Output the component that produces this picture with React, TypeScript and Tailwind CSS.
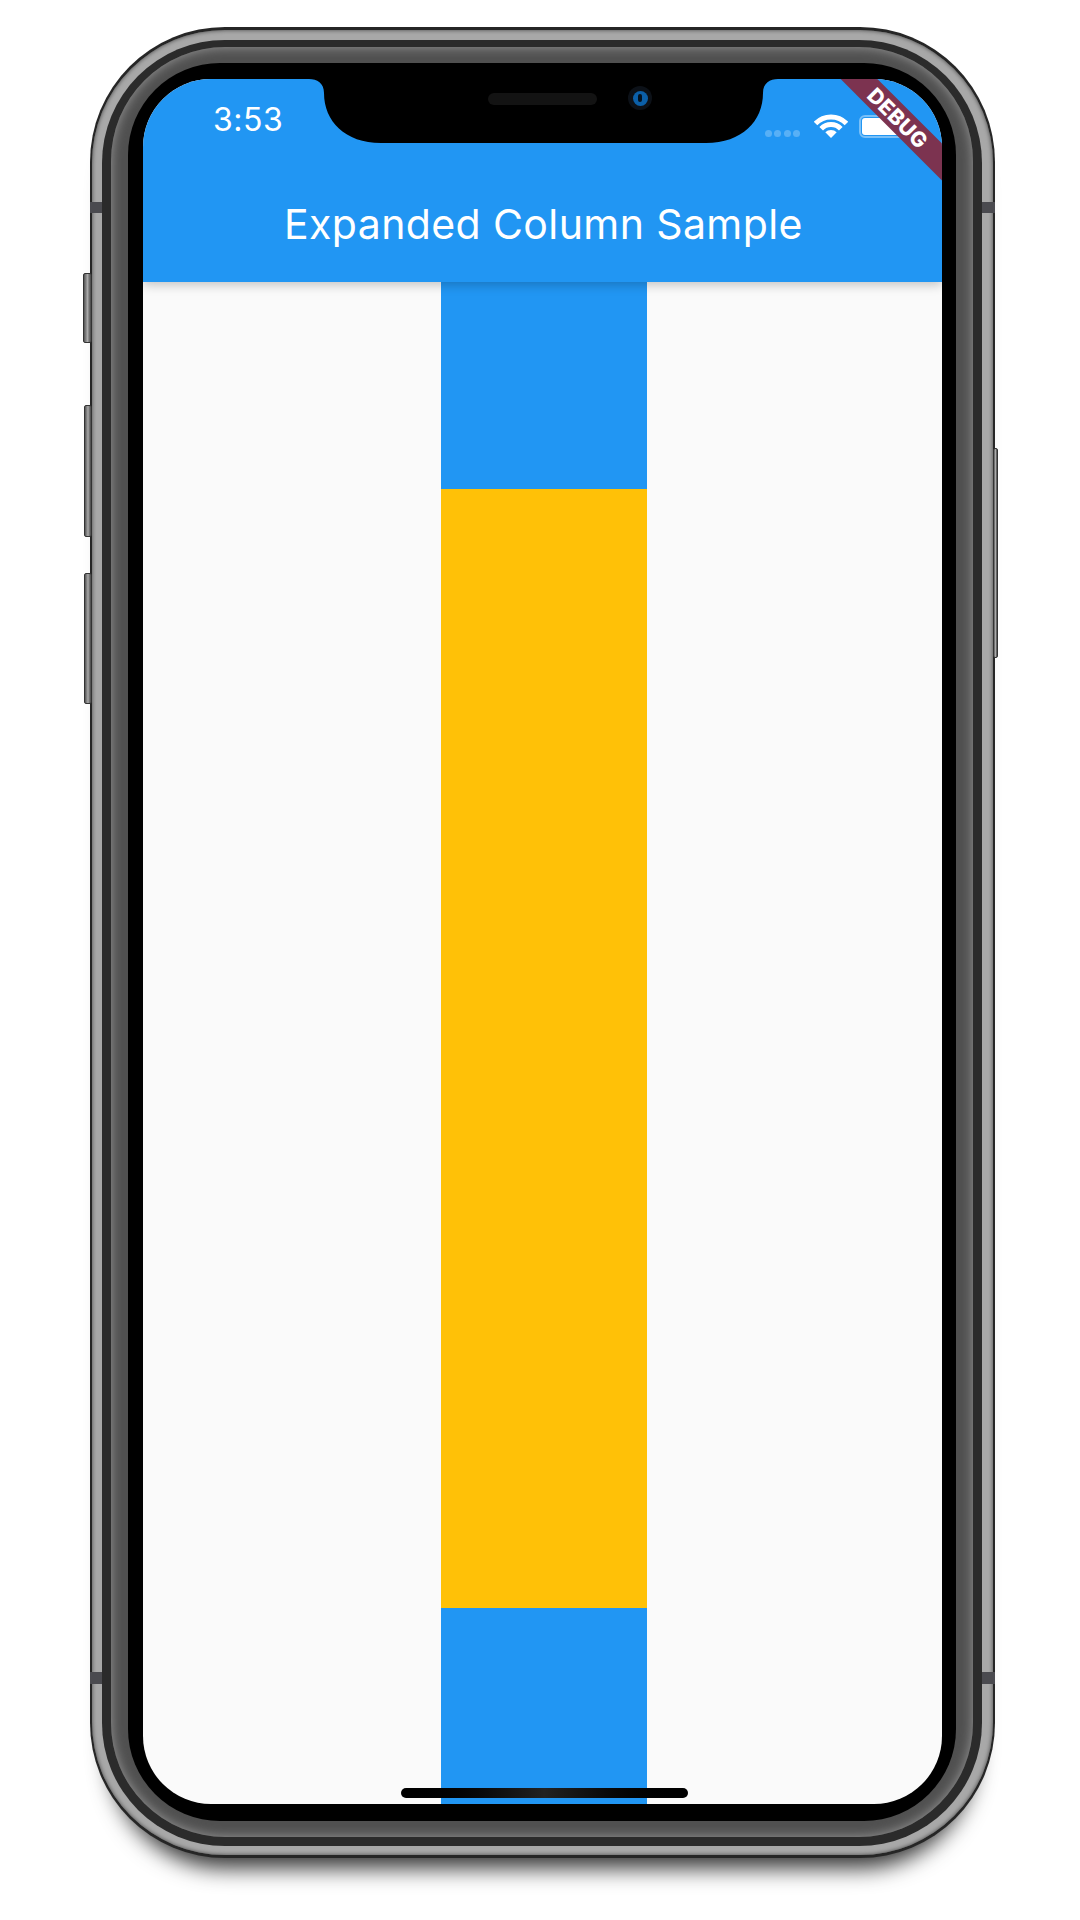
import * as React from 'react';

const SideButton = ({ className }: { className: string }) => (
	<div
		className={`absolute rounded-[2px] border border-[#333] bg-gradient-to-r from-[#555] via-[#aaa] to-[#444] ${className}`}
	/>
);

const Wifi = () => (
	<svg width="34" height="24" viewBox="0 0 34 24" fill="none">
		<path d="M1.5 9.5A21.5 21.5 0 0 1 32.5 9.5" stroke="white" strokeWidth="5" />
		<path d="M7.2 14.8A13.5 13.5 0 0 1 26.8 14.8" stroke="white" strokeWidth="5" />
		<path d="M17 24L11.3 18.3A8 8 0 0 1 22.7 18.3Z" fill="white" />
	</svg>
);

const StatusBar = () => (
	<div className="flex h-[94px] items-end justify-between pb-[35px] pl-[70px] pr-[36px]">
		<span className="text-[32px] leading-[36px] tracking-[0.5px] text-white">3:53</span>
		<div className="flex items-center">
			<div className="mt-[14px] flex gap-[2.5px]">
				<div className="size-[7px] rounded-full bg-white/25" />
				<div className="size-[7px] rounded-full bg-white/25" />
				<div className="size-[7px] rounded-full bg-white/25" />
				<div className="size-[7px] rounded-full bg-white/25" />
			</div>
			<div className="ml-[14px] mr-[11px]">
				<Wifi />
			</div>
			<div className="h-[23px] w-[47px] rounded-[6px] border-2 border-white/40 p-[1px]">
				<div className="h-full w-[38px] rounded-[3px] bg-white" />
			</div>
		</div>
	</div>
);

const AppBar = () => (
	<div className="z-10 h-[203px] shrink-0 bg-[#2196f3] shadow-[0_3px_10px_rgba(0,0,0,0.22)]">
		<StatusBar />
		<div className="mt-[27px] pl-[141px] text-[41px] leading-[48px] tracking-[0.4px] text-white">
			Expanded Column Sample
		</div>
	</div>
);

const Notch = () => (
	<div className="absolute left-[166px] top-0 z-20">
		<div className="relative h-[65px] w-[469px]">
			<svg width="469" height="65" viewBox="0 0 469 65" className="block">
				<path
					d="M0 0C8 0 15 4 15 14C15 42 36 64 72 64H397C433 64 454 42 454 14C454 4 461 0 469 0Z"
					fill="black"
				/>
			</svg>
			<div className="absolute left-[179px] top-[14px] h-[12px] w-[109px] rounded-full bg-[#131313]" />
			<div className="absolute left-[319px] top-[7px] flex size-[24px] items-center justify-center rounded-full bg-[#0c1118]">
				<div className="flex size-[15px] items-center justify-center rounded-full bg-[#0b5fa8]">
					<div className="h-[8px] w-[4px] rounded-full bg-[#04121f]" />
				</div>
			</div>
		</div>
	</div>
);

const DebugBanner = () => (
	<div className="absolute left-[655px] top-[26px] z-30 flex h-[26px] w-[200px] rotate-45 items-center justify-center bg-[#7c3350] text-[21px] font-extrabold leading-none tracking-[0.5px] text-white">
		DEBUG
	</div>
);

const App = () => {
	return (
		<div className="h-[1920px] w-[1080px] overflow-hidden bg-white pl-[90px] pt-[27px] font-['Inter',sans-serif]">
			<div className="relative h-[1831px] w-[905px]">
				<SideButton className="left-[-7px] top-[246px] h-[70px] w-[9px]" />
				<SideButton className="left-[-6px] top-[378px] h-[132px] w-[8px]" />
				<SideButton className="left-[-6px] top-[546px] h-[131px] w-[8px]" />
				<SideButton className="right-[-3px] top-[421px] h-[210px] w-[5px]" />

				<div className="h-full w-full rounded-[135px] bg-[#262626] pb-[3px] pl-[2px] pr-[2px] pt-[3px] shadow-[0_30px_22px_-20px_rgba(0,0,0,0.8)]">
					<div className="h-full w-full rounded-[133px] bg-[#a8a8a8] pb-[9px] pl-[10px] pr-[11px] pt-[10px] shadow-[inset_0_0_4px_#444]">
						<div className="h-full w-full rounded-[123px] bg-[#2b2b2b] pb-[9px] pl-[9px] pr-[9px] pt-[7px]">
							<div className="h-full w-full rounded-[114px] bg-[#505050] pb-[16px] pl-[17px] pr-[17px] pt-[16px] shadow-[inset_0_0_12px_#999]">
								<div className="h-full w-full rounded-[92px] bg-black pb-[17px] pl-[15px] pr-[14px] pt-[16px]">
									<div className="relative flex h-full w-full flex-col overflow-hidden rounded-[68px] bg-[#fafafa]">
										<AppBar />
										<div className="flex-1 pl-[298px]">
											<div className="flex h-full w-[206px] flex-col">
												<div className="h-[207px] bg-[#2196f3]" />
												<div className="h-[1119px] bg-[#ffc107]" />
												<div className="flex-1 bg-[#2196f3]" />
											</div>
										</div>
										<Notch />
										<DebugBanner />
										<div className="absolute bottom-[6px] left-[258px] z-20 h-[10px] w-[287px] rounded-full bg-gradient-to-r from-black via-[#222] to-black" />
									</div>
								</div>
							</div>
						</div>
					</div>
				</div>

				<div className="absolute left-0 top-[175px] h-[11px] w-[12px] bg-[#4a4a4f]" />
				<div className="absolute right-0 top-[175px] h-[11px] w-[13px] bg-[#4a4a4f]" />
				<div className="absolute left-0 top-[1645px] h-[12px] w-[12px] bg-[#4a4a4f]" />
				<div className="absolute right-0 top-[1645px] h-[12px] w-[13px] bg-[#4a4a4f]" />
			</div>
		</div>
	);
};

export default App;
